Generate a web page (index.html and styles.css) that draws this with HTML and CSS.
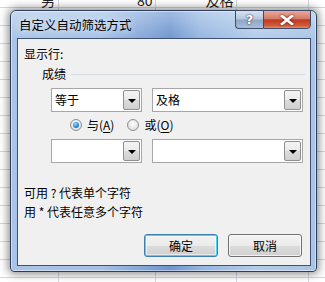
FILE: index.html
```html
<!DOCTYPE html>
<html>
<head>
    <title>自定义自动筛选方式</title>
    <meta charset="utf-8">
    <link rel="stylesheet" href="styles.css">
</head>
<body>
    <!-- Sheet behind the dialog -->
    <div class="sheet">
        <div class="sheet-row">
            <span class="cell cell-a">男</span>
            <span class="cell cell-b">80</span>
            <span class="cell cell-c">及格</span>
        </div>
    </div>

    <!-- Dialog -->
    <div class="dialog">
        <div class="title-bar">
            <span class="title">自定义自动筛选方式</span>
            <div class="caption-btns">
                <button class="cap-help">?</button>
                <button class="cap-close">
                    <svg width="14" height="10" viewBox="0 0 14 10">
                        <path d="M2 1 L12 9 M12 1 L2 9" stroke="#fff" stroke-width="2.6" stroke-linecap="square"/>
                    </svg>
                </button>
            </div>
        </div>

        <div class="client">
            <div class="label">显示行:</div>
            <div class="group">
                <span>成绩</span>
                <span class="group-line"></span>
            </div>

            <div class="combo-row">
                <div class="combo combo-small">
                    <span class="combo-text">等于</span>
                    <span class="combo-btn"><i class="arrow"></i></span>
                </div>
                <div class="combo combo-wide">
                    <span class="combo-text">及格</span>
                    <span class="combo-btn"><i class="arrow"></i></span>
                </div>
            </div>

            <div class="radio-row">
                <label class="radio"><span class="dot checked"></span><span>与(<u>A</u>)</span></label>
                <label class="radio"><span class="dot"></span><span>或(<u>O</u>)</span></label>
            </div>

            <div class="combo-row">
                <div class="combo combo-small">
                    <span class="combo-text"></span>
                    <span class="combo-btn"><i class="arrow"></i></span>
                </div>
                <div class="combo combo-wide">
                    <span class="combo-text"></span>
                    <span class="combo-btn"><i class="arrow"></i></span>
                </div>
            </div>

            <div class="hints">
                <div>可用 ? 代表单个字符</div>
                <div>用 * 代表任意多个字符</div>
            </div>

            <div class="actions">
                <button class="btn btn-default">确定</button>
                <button class="btn">取消</button>
            </div>
        </div>
    </div>
</body>
</html>
```

FILE: styles.css
```css
* {
    box-sizing: border-box;
    margin: 0;
    padding: 0;
}

body {
    width: 325px;
    height: 282px;
    overflow: hidden;
    position: relative;
    font-family: "Noto Sans CJK SC", "Noto Sans", sans-serif;
    font-size: 12px;
    color: #000;
    background: #fff;
}

/* Spreadsheet grid */
.sheet {
    height: 282px;
    background-color: #fff;
    background-image:
        linear-gradient(90deg, transparent 58px, #d4d8de 58px, #d4d8de 59px, transparent 59px,
            transparent 155px, #d4d8de 155px, #d4d8de 156px, transparent 156px,
            transparent 236px, #d4d8de 236px, #d4d8de 237px, transparent 237px,
            transparent 308px, #d4d8de 308px, #d4d8de 309px, transparent 309px),
        repeating-linear-gradient(180deg, transparent 0, transparent 7px, #d4d8de 7px, #d4d8de 8px, transparent 8px, transparent 18px);
}

.sheet-row {
    display: flex;
    height: 8px;
    line-height: 12px;
    overflow: hidden;
    font-size: 14px;
    color: #222;
}

.sheet-row .cell {
    margin-top: -6px;
}

.cell-a {
    margin-left: 41px;
}

.cell-b {
    margin-left: 82px;
}

.cell-c {
    margin-left: 53px;
}

/* Window frame */
.dialog {
    position: absolute;
    left: 10px;
    top: 10px;
    width: 307px;
    height: 262px;
    border: 1px solid #2b3f5c;
    border-radius: 6px 6px 4px 4px;
    background:
        linear-gradient(180deg, rgba(255,255,255,0.35) 0, rgba(255,255,255,0) 30px),
        linear-gradient(90deg, #a9c4e6 0%, #a2c0e6 30%, #7ea3d6 45%, #6c95cf 52%, #93b5e0 62%, #b2cbea 80%, #a9c4e6 100%);
    box-shadow: 0 0 9px 2px rgba(0,0,0,0.45), inset 0 0 0 1px rgba(255,255,255,0.45);
    padding: 0 5px 5px 6px;
    display: flex;
    flex-direction: column;
}

.title-bar {
    height: 27px;
    display: flex;
    align-items: flex-start;
    justify-content: space-between;
}

.title {
    margin-top: 6px;
    margin-left: 2px;
    font-size: 12.5px;
    line-height: 16px;
    color: #000;
    text-shadow: 0 0 6px rgba(255,255,255,0.9);
}

.caption-btns {
    display: flex;
    margin-top: -1px;
}

.caption-btns button {
    height: 19px;
    border: 1px solid #3b4d66;
    color: #fff;
    font-family: "DejaVu Sans", sans-serif;
    font-weight: bold;
    display: flex;
    align-items: center;
    justify-content: center;
}

.cap-help {
    width: 28px;
    border-radius: 0 0 0 4px;
    border-right: none !important;
    font-size: 13px;
    background: linear-gradient(180deg, #d8e3f0 0%, #b5c6dc 48%, #8ea7c6 52%, #a9bdd6 100%);
    text-shadow: 0 0 2px #2b3f5c, 0 0 1px #2b3f5c;
}

.cap-close {
    width: 48px;
    border-radius: 0 0 4px 0;
    background: linear-gradient(180deg, #e9a99a 0%, #d57a68 45%, #c0391f 52%, #cf5a3b 85%, #e88c6c 100%);
}

.cap-close svg {
    filter: drop-shadow(0 0 1px #5a1a10);
}

/* Client area */
.client {
    flex: 1;
    background: #f0f0f0;
    border: 1px solid #3e5373;
    padding: 7px 0 0 6px;
    display: flex;
    flex-direction: column;
}

.label {
    line-height: 16px;
}

.group {
    display: flex;
    align-items: center;
    margin-top: 4px;
    padding-left: 18px;
    line-height: 16px;
}

.group-line {
    flex: 1;
    height: 1px;
    background: #d5dfe5;
    margin: 0 5px;
}

.combo-row {
    display: flex;
    gap: 10px;
    margin-top: 6px;
    padding-left: 27px;
}

.combo {
    height: 24px;
    background: #fff;
    border: 1px solid #a7a7a7;
    display: flex;
    align-items: stretch;
}

.combo-small {
    width: 91px;
}

.combo-wide {
    width: 151px;
}

.combo-text {
    flex: 1;
    padding-left: 3px;
    line-height: 22px;
}

.combo-btn {
    width: 17px;
    margin: 1px;
    border: 1px solid #8f8f8f;
    border-radius: 2px;
    background: linear-gradient(180deg, #f3f3f3 0%, #ebebeb 50%, #dcdcdc 51%, #cfcfcf 100%);
    display: flex;
    align-items: center;
    justify-content: center;
}

.arrow {
    width: 0;
    height: 0;
    border-left: 4px solid transparent;
    border-right: 4px solid transparent;
    border-top: 4px solid #000;
    margin-top: 1px;
}

.radio-row {
    display: flex;
    gap: 13px;
    margin-top: 5px;
    padding-left: 46px;
    line-height: 16px;
}

.radio {
    display: flex;
    align-items: center;
    gap: 5px;
}

.dot {
    width: 12px;
    height: 12px;
    border-radius: 50%;
    border: 1px solid #8e8f8f;
    background: radial-gradient(circle at 50% 40%, #ffffff 0%, #e6e6e6 60%, #d0d0d0 100%);
    position: relative;
}

.dot.checked::after {
    content: "";
    position: absolute;
    left: 2px;
    top: 2px;
    width: 6px;
    height: 6px;
    border-radius: 50%;
    background: radial-gradient(circle at 40% 35%, #9fd9ff 0%, #2a8ad4 55%, #0d4f8f 100%);
}

.radio u {
    text-decoration: underline;
    text-underline-offset: 2px;
}

.hints {
    margin-top: 20px;
    line-height: 19px;
}

.actions {
    display: flex;
    justify-content: flex-end;
    gap: 10px;
    margin-top: 13px;
    padding-right: 8px;
}

.btn {
    width: 74px;
    height: 23px;
    font-family: inherit;
    font-size: 12px;
    color: #000;
    border: 1px solid #707070;
    border-radius: 3px;
    background: linear-gradient(180deg, #f2f2f2 0%, #ebebeb 50%, #dddddd 51%, #cfcfcf 100%);
    box-shadow: inset 0 0 0 1px rgba(255,255,255,0.7);
}

.btn-default {
    border-color: #3c7fb1;
    box-shadow: inset 0 0 0 1px #48d3fb, inset 0 0 0 2px rgba(255,255,255,0.5);
}
```
